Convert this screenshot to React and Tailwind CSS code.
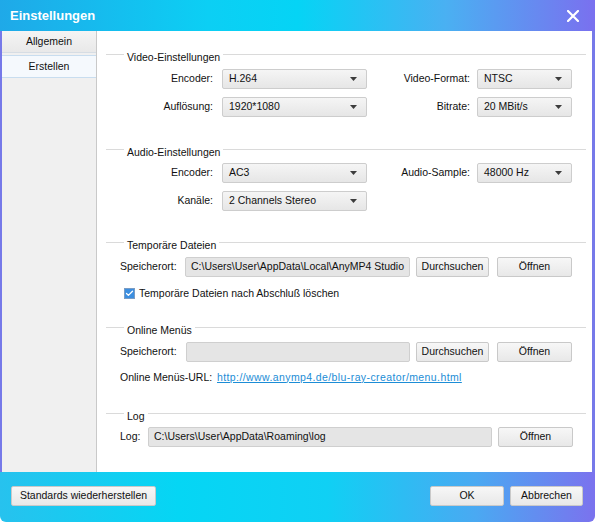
import { Check } from 'lucide-react';

const font = { fontFamily: '"Liberation Sans", Arial, sans-serif' };

function Combo({ value, width }) {
  return (
    <div
      className={`${width} h-[20px] flex items-center justify-between pl-[6px] pr-[9px] border border-[#cdcdcd] rounded-[2px] bg-gradient-to-b from-[#f5f5f5] to-[#e6e6e6] text-[10.5px] text-[#111]`}
    >
      <span>{value}</span>
      <svg width="7" height="4" viewBox="0 0 7 4">
        <path d="M0 0 L7 0 L3.5 4 Z" fill="#3c3c3c" />
      </svg>
    </div>
  );
}

function Field({ value, width }) {
  return (
    <div
      className={`${width} h-[20px] flex items-center pl-[5px] border border-[#cfcfcf] rounded-[2px] bg-[#e5e5e5] text-[10.5px] text-[#111] overflow-hidden whitespace-nowrap`}
    >
      {value}
    </div>
  );
}

function Button({ children, width, className = '' }) {
  return (
    <div
      className={`${width} h-[20px] flex items-center justify-center border border-[#c9c9c9] rounded-[2px] bg-gradient-to-b from-[#f7f7f7] to-[#e8e8e8] text-[10.5px] text-[#111] ${className}`}
    >
      {children}
    </div>
  );
}

function GroupHeader({ label, className = '' }) {
  return (
    <div className={`flex items-start h-[13px] pl-[9px] pr-[6px] ${className}`}>
      <div className="w-[18px] h-px bg-[#dadada] mt-[3px]" />
      <span className="px-[3px] text-[10.5px] leading-[13px] text-[#111]">{label}</span>
      <div className="flex-1 h-px bg-[#dadada] mt-[3px]" />
    </div>
  );
}

function PairRow({ l1, v1, l2, v2, className = '' }) {
  return (
    <div className={`flex items-center text-[10.5px] ${className}`}>
      <span className="w-[116px] text-right text-[#111]">{l1}</span>
      <div className="ml-[9px]">
        <Combo value={v1} width="w-[145px]" />
      </div>
      {l2 && (
        <>
          <span className="w-[103px] text-right text-[#111]">{l2}</span>
          <div className="ml-[7px]">
            <Combo value={v2} width="w-[95px]" />
          </div>
        </>
      )}
    </div>
  );
}

export default function App() {
  return (
    <div className="w-[595px] h-[522px] flex flex-col overflow-hidden rounded-b-[6px]" style={font}>
      <div className="h-[31px] shrink-0 flex items-center justify-between pl-[10px] pr-[16px] bg-[linear-gradient(to_right,#1fa9e8_0%,#0ccff4_35%,#05d4f5_50%,#4ab0f2_75%,#7a70ef_100%)]">
        <span className="text-white font-bold text-[13px]">Einstellungen</span>
        <svg width="12" height="12" viewBox="0 0 12 12">
          <path d="M1 1 L11 11 M11 1 L1 11" stroke="#fff" strokeWidth="2.2" strokeLinecap="square" />
        </svg>
      </div>

      <div className="flex-1 flex bg-[#7679e9] pl-[2px] pr-[3px]">
        <div className="w-[95px] shrink-0 bg-[#f0f0f0] border-r border-[#c9c9c9] flex flex-col text-[10.5px] text-[#111]">
          <div className="h-[22px] flex items-center justify-center bg-gradient-to-b from-[#f4f4f4] to-[#e9e9e9] border-b border-[#d6dde4]">
            Allgemein
          </div>
          <div className="h-[23px] mt-[2px] flex items-center justify-center bg-[#f5f9fd] border-y border-[#c8ddef]">
            Erstellen
          </div>
        </div>

        <div className="flex-1 bg-white pt-[20px] flex flex-col">
          <GroupHeader label="Video-Einstellungen" />
          <PairRow className="mt-[5px]" l1="Encoder:" v1="H.264" l2="Video-Format:" v2="NTSC" />
          <PairRow className="mt-[8px]" l1="Auflösung:" v1="1920*1080" l2="Bitrate:" v2="20 MBit/s" />

          <GroupHeader label="Audio-Einstellungen" className="mt-[29px]" />
          <PairRow className="mt-[4px]" l1="Encoder:" v1="AC3" l2="Audio-Sample:" v2="48000 Hz" />
          <PairRow className="mt-[8px]" l1="Kanäle:" v1="2 Channels Stereo" />

          <GroupHeader label="Temporäre Dateien" className="mt-[28px]" />
          <div className="mt-[5px] flex items-center pl-[23px] text-[10.5px]">
            <span className="w-[65px] text-[#111]">Speicherort:</span>
            <Field value="C:\Users\User\AppData\Local\AnyMP4 Studio" width="w-[225px]" />
            <Button width="w-[73px]" className="ml-[6px]">Durchsuchen</Button>
            <Button width="w-[75px]" className="ml-[8px]">Öffnen</Button>
          </div>
          <div className="mt-[10px] flex items-center pl-[27px] h-[13px]">
            <div className="w-[11px] h-[11px] border border-[#7a9cc4] bg-[#3b8ee0] flex items-center justify-center">
              <Check size={9} strokeWidth={3.5} color="#fff" />
            </div>
            <span className="ml-[4px] text-[10.5px] text-[#111]">Temporäre Dateien nach Abschluß löschen</span>
          </div>

          <GroupHeader label="Online Menüs" className="mt-[24px]" />
          <div className="mt-[5px] flex items-center pl-[23px] text-[10.5px]">
            <span className="w-[66px] text-[#111]">Speicherort:</span>
            <Field value="" width="w-[224px]" />
            <Button width="w-[73px]" className="ml-[6px]">Durchsuchen</Button>
            <Button width="w-[75px]" className="ml-[8px]">Öffnen</Button>
          </div>
          <div className="mt-[9px] flex items-center pl-[23px] h-[13px] text-[10.5px]">
            <span className="w-[97px] shrink-0 text-[#111]">Online Menüs-URL:</span>
            <span className="text-[#1c8dd6] underline tracking-[0.4px]">http://www.anymp4.de/blu-ray-creator/menu.html</span>
          </div>

          <GroupHeader label="Log" className="mt-[26px]" />
          <div className="mt-[4px] flex items-center pl-[23px] text-[10.5px]">
            <span className="w-[28px] text-[#111]">Log:</span>
            <Field value="C:\Users\User\AppData\Roaming\log" width="w-[344px]" />
            <Button width="w-[75px]" className="ml-[6px]">Öffnen</Button>
          </div>
        </div>
      </div>

      <div className="h-[50px] shrink-0 flex items-start justify-between pt-[14px] pl-[11px] pr-[12px] bg-[linear-gradient(to_right,#27c2ee_0%,#05d6f4_30%,#10d0f4_55%,#4aa9f2_80%,#7b72ee_100%)]">
        <Button width="w-[145px]">Standards wiederherstellen</Button>
        <div className="flex gap-[6px]">
          <Button width="w-[74px]">OK</Button>
          <Button width="w-[73px]">Abbrechen</Button>
        </div>
      </div>
    </div>
  );
}
